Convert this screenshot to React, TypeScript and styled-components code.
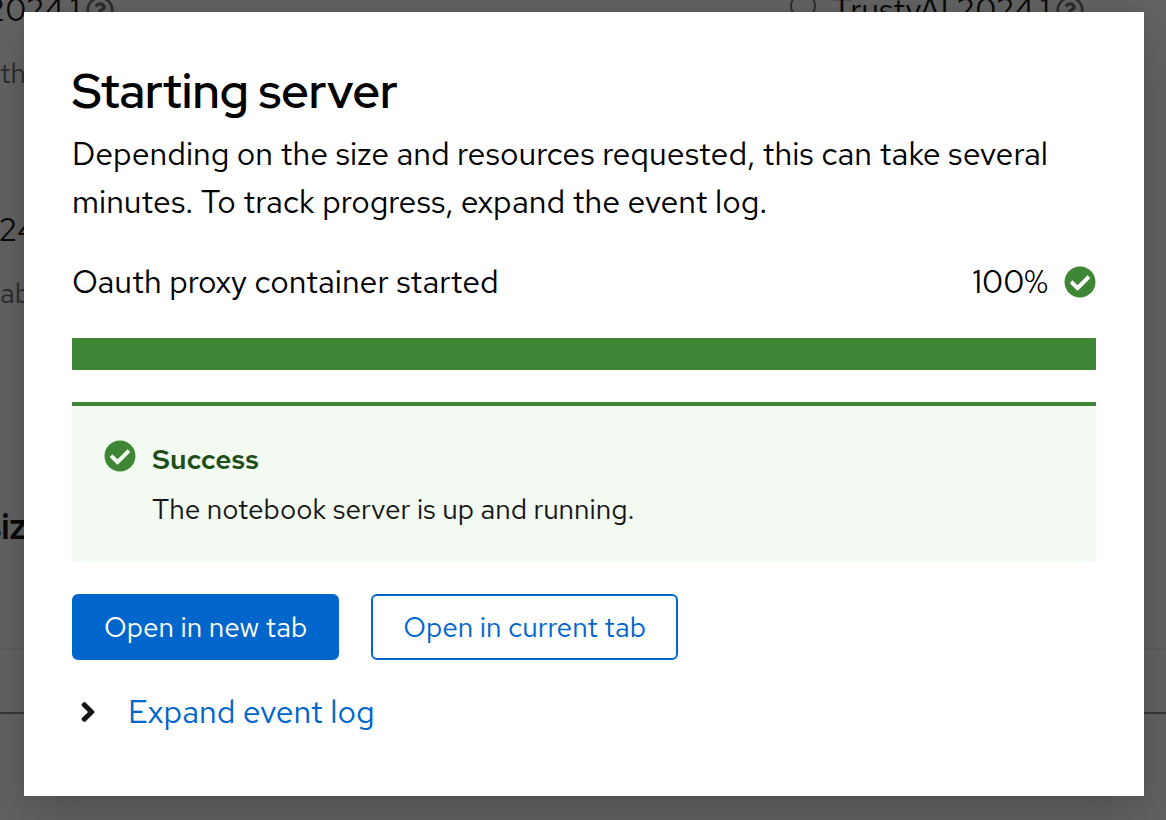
import React from 'react';
import styled, { createGlobalStyle } from 'styled-components';
import { FaAngleRight, FaCheckCircle, FaRegQuestionCircle } from 'react-icons/fa';

const GlobalStyle = createGlobalStyle`
  *, *::before, *::after { box-sizing: border-box; }
  html, body, #root { height: 100%; }
  body {
    margin: 0;
    overflow: hidden;
    background: #fff;
    color: #151515;
    font-family: 'Red Hat Text', Lato, sans-serif;
    font-size: 32px;
    line-height: 48px;
  }
  h1, h2, p { margin: 0; }
`;

const Screen = styled.div`
  position: relative;
  min-height: 100%;
  overflow: hidden;
`;

const Backdrop = styled.div`
  position: absolute;
  inset: 0;
  background: rgba(3, 3, 3, 0.62);
`;

const Page = styled.div`
  position: absolute;
  inset: 0;
  overflow: hidden;
`;

const ImageGrid = styled.div`
  display: grid;
  grid-template-columns: 790px 1fr;
  margin-top: -14px;
`;

const ImageColumn = styled.div`
  min-width: 0;
  overflow: hidden;
`;

const ImageName = styled.label<{ $clip?: number }>`
  display: flex;
  align-items: center;
  gap: 6px;
  height: 48px;
  margin-left: ${({ $clip = 0 }) => -$clip}px;
`;

const HelpIcon = styled(FaRegQuestionCircle)`
  width: 28px;
  height: 28px;
  color: #6a6e73;
`;

const Radio = styled.input`
  appearance: none;
  width: 26px;
  height: 26px;
  margin: 0 10px 8px 0;
  border: 2px solid #767676;
  border-radius: 50%;
`;

const ImageDetail = styled.p`
  height: 172px;
  padding-top: 18px;
  color: #6a6e73;
  font-size: 28px;
  line-height: 42px;
`;

const SectionTitle = styled.h2`
  margin: 76px 0 98px -16px;
  font-family: 'Red Hat Display', 'Red Hat Text', Lato, sans-serif;
  font-size: 36px;
  font-weight: 700;
  line-height: 48px;
`;

const SizeField = styled.div`
  height: 66px;
  border-top: 2px solid #f0f0f0;
  border-bottom: 2px solid #8a8d90;
`;

const Layer = styled.div`
  position: relative;
  padding: 12px 22px 24px 24px;
`;

const Modal = styled.section`
  display: flex;
  flex-direction: column;
  gap: 32px;
  padding: 48px 48px 60px;
  background: #fff;
  color: #000;
  box-shadow: 0 32px 64px rgba(3, 3, 3, 0.16), 0 0 16px rgba(3, 3, 3, 0.1);
`;

const Header = styled.header`
  display: flex;
  flex-direction: column;
  gap: 8px;
`;

const Title = styled.h1`
  font-family: 'Red Hat Display', 'Red Hat Text', Lato, sans-serif;
  font-size: 48px;
  font-weight: 600;
  line-height: 62px;
`;

const ProgressBlock = styled.div`
  display: flex;
  flex-direction: column;
  gap: 32px;
`;

const ProgressHead = styled.div`
  display: flex;
  justify-content: space-between;
`;

const Measure = styled.span`
  display: flex;
  align-items: center;
  gap: 16px;
`;

const StatusIcon = styled(FaCheckCircle)`
  flex: none;
  width: 32px;
  height: 32px;
  color: #3e8635;
`;

const Track = styled.div`
  height: 32px;
  background: #d8e7d6;
`;

const Bar = styled.div`
  height: 100%;
  background: #3e8635;
`;

const Alert = styled.div`
  display: flex;
  gap: 16px;
  padding: 32px;
  border-top: 4px solid #3e8635;
  background: #f3faf2;
  font-size: 28px;
  line-height: 42px;
`;

const AlertIcon = styled.span`
  display: flex;
  padding-top: 2px;
`;

const AlertText = styled.div`
  display: flex;
  flex-direction: column;
  gap: 8px;
  color: #151515;
`;

const AlertTitle = styled.h2`
  color: #1e4f18;
  font-size: 28px;
  font-weight: 600;
`;

const Actions = styled.div`
  display: flex;
  gap: 32px;
`;

const Button = styled.button<{ $primary?: boolean }>`
  padding: 10px 30px;
  border: 2px solid #06c;
  border-radius: 6px;
  background: ${({ $primary }) => ($primary ? '#06c' : 'transparent')};
  color: ${({ $primary }) => ($primary ? '#fff' : '#06c')};
  font: inherit;
  font-size: 28px;
  line-height: 42px;
  cursor: pointer;
`;

const Toggle = styled.button`
  display: flex;
  align-items: center;
  align-self: flex-start;
  gap: 30px;
  margin-top: -4px;
  padding: 0 0 0 6px;
  border: 0;
  background: none;
  color: #06c;
  font: inherit;
  cursor: pointer;
`;

const ToggleIcon = styled(FaAngleRight)`
  width: 20px;
  height: 32px;
  color: #151515;
`;

export default function App() {
  const progress = 100;
  return (
    <>
      <GlobalStyle />
      <Screen>
        <Page aria-hidden="true">
          <ImageGrid>
            <ImageColumn>
              <ImageName $clip={14}>2024.1 <HelpIcon /></ImageName>
              <ImageDetail>th</ImageDetail>
            </ImageColumn>
            <ImageColumn>
              <ImageName>
                <Radio type="radio" name="image" />
                TrustyAI 2024.1 <HelpIcon />
              </ImageName>
            </ImageColumn>
            <ImageColumn>
              <ImageName $clip={22}>024</ImageName>
              <ImageDetail>ab</ImageDetail>
            </ImageColumn>
          </ImageGrid>
          <SectionTitle>size</SectionTitle>
          <SizeField />
        </Page>
        <Backdrop />
        <Layer>
          <Modal role="dialog" aria-modal="true" aria-labelledby="server-title">
            <Header>
              <Title id="server-title">Starting server</Title>
              <p>
                Depending on the size and resources requested, this can take several minutes. To
                track progress, expand the event log.
              </p>
            </Header>
            <ProgressBlock>
              <ProgressHead>
                <span id="progress-label">Oauth proxy container started</span>
                <Measure>{progress}% <StatusIcon /></Measure>
              </ProgressHead>
              <Track
                role="progressbar"
                aria-labelledby="progress-label"
                aria-valuemin={0}
                aria-valuemax={100}
                aria-valuenow={progress}
              >
                <Bar style={{ width: `${progress}%` }} />
              </Track>
            </ProgressBlock>
            <Alert role="status">
              <AlertIcon><StatusIcon /></AlertIcon>
              <AlertText>
                <AlertTitle>Success</AlertTitle>
                <p>The notebook server is up and running.</p>
              </AlertText>
            </Alert>
            <Actions>
              <Button type="button" $primary>Open in new tab</Button>
              <Button type="button">Open in current tab</Button>
            </Actions>
            <Toggle type="button" aria-expanded="false">
              <ToggleIcon />
              Expand event log
            </Toggle>
          </Modal>
        </Layer>
      </Screen>
    </>
  );
}
